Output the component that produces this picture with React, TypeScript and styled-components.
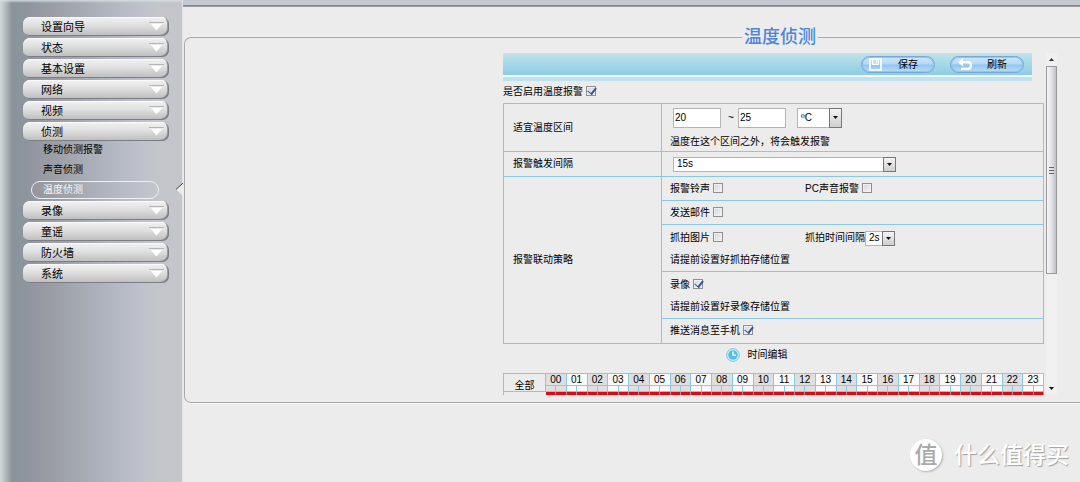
import React from "react";
import styled, { createGlobalStyle, css } from "styled-components";

const LINE = "#86c9e1";

const GlobalStyle = createGlobalStyle`
  * { box-sizing: border-box; }
  body {
    margin: 0;
    background: #ececec;
    color: #000;
    font-family: "Liberation Sans", "Noto Sans CJK SC", sans-serif;
    font-size: 10px;
    line-height: 12px;
  }
  button, input, select { font: inherit; color: inherit; margin: 0; }
`;

const Page = styled.div`
  display: grid;
  grid-template-columns: 183px minmax(0, 1fr);
  min-height: 100vh;
`;

const Sidebar = styled.nav`
  padding: 17px 13px 17px 23px;
  border-right: 1px solid #e4e2e8;
  background:
    linear-gradient(180deg, rgba(214, 224, 228, 0.9) 0, rgba(214, 224, 228, 0) 3px),
    linear-gradient(90deg, #d0dada 0, #b4bfc0 5px, #8a939b 12px, #8d949d 25px, #9396a1 32px,
      #9b9fa4 54px, #a3a7b0 75px, #b2b6c0 110px, #bfc2cc 143px, #c2c5c9 155px, #c4c6cb 180px);
`;

const MenuList = styled.ul`
  display: flex;
  flex-direction: column;
  gap: 2px;
  margin: 0;
  padding: 0;
  list-style: none;
`;

const MenuButton = styled.button`
  display: flex;
  align-items: center;
  justify-content: space-between;
  width: 100%;
  height: 19px;
  padding: 0 4px 0 18px;
  border: 0;
  border-radius: 7px;
  background: linear-gradient(180deg, #f2f2f2 0, #dfdfdf 45%, #bcbcbc 100%);
  box-shadow: inset -1px -1px 0 #7d7d84, inset -2px -1px 0 #9c9ca2, inset 0 1px 0 #fafafa;
  font-size: 11px;
  text-align: left;
`;

const SubList = styled.ul`
  display: flex;
  flex-direction: column;
  gap: 2px;
  margin: 0;
  padding: 0 10px 0 8px;
  list-style: none;
`;

const SubItem = styled.li`
  position: relative;
`;

const SubLink = styled.a<{ $active?: boolean }>`
  display: block;
  height: 18px;
  padding-left: 11px;
  border: 1px solid transparent;
  border-radius: 9px;
  color: #000;
  line-height: 16px;
  text-decoration: none;
  ${(p) => p.$active && css`
    border-color: #eef0f4;
    color: #f4f5f8;
  `}
`;

const Notch = styled.svg`
  position: absolute;
  top: 1px;
  right: -24px;
`;

const Main = styled.main`
  border-top: 5px solid #c3c9d0;
`;

const TopRule = styled.div`
  height: 2px;
  background: linear-gradient(180deg, #77767f, #a9a9af);
`;

const Panel = styled.fieldset`
  min-width: 0;
  margin: 19px 0 0 1px;
  padding: 5px 23px 7px 0;
  border: 1px solid #a9a9a9;
  border-right: 0;
  border-radius: 7px 0 0 7px;
  box-shadow: 0 1px 0 #f8f8f8;
`;

const PanelTitle = styled.legend`
  margin-left: auto;
  margin-right: 239px;
  padding: 0 2px;
  color: #4d86d8;
  font-size: 18px;
  font-weight: 500;
  line-height: 22px;
`;

const ScrollPane = styled.div`
  display: flex;
  justify-content: space-between;
  width: 554px;
  margin-left: auto;
`;

const Content = styled.div`
  flex: 0 0 541px;
`;

const Toolbar = styled.div`
  display: flex;
  justify-content: flex-end;
  gap: 15px;
  height: 28px;
  margin-right: 12px;
  padding: 3px 8px 0 0;
  background: linear-gradient(180deg, #c2e3ec 0, #8bcde4 22px, #f4fafc 22px, #f4fafc 24px, #bfe3ee 24px);
`;

const ToolButton = styled.button`
  display: flex;
  align-items: center;
  justify-content: space-between;
  width: 74px;
  height: 17px;
  padding: 0 16px 0 7px;
  border: 1px solid #74a9d8;
  border-radius: 9px;
  background: linear-gradient(180deg, #cfe6fa 0, #b4d8f8 48%, #8fc3f2 52%, #b9defa 100%);
  box-shadow: inset 0 0 0 1px #98c4ea;
`;

const EnableRow = styled.div`
  display: flex;
  align-items: center;
  height: 22px;
`;

const CheckLabel = styled.label`
  display: inline-flex;
  align-items: flex-start;
  gap: 3px;
  white-space: nowrap;
`;

const Check = styled.input.attrs({ type: "checkbox" })`
  appearance: none;
  position: relative;
  width: 10px;
  height: 10px;
  border: 1px solid #8e8f8f;
  background: linear-gradient(135deg, #cfd3d8, #f8f8f8);
  box-shadow: inset 0 0 0 1px #f0f0f0;
  &:checked::after {
    content: "";
    position: absolute;
    left: 2px;
    top: -1px;
    width: 4px;
    height: 7px;
    border: solid #3450a8;
    border-width: 0 2px 1px 0;
    transform: rotate(38deg);
  }
`;

const SettingsTable = styled.table`
  width: 100%;
  border-collapse: collapse;
  table-layout: fixed;
`;

const SettingName = styled.th`
  width: 158px;
  padding: 0 9px;
  border: 1px solid ${LINE};
  font-weight: 400;
  text-align: left;
`;

const SettingCell = styled.td<{ $h: number }>`
  height: ${(p) => p.$h}px;
  padding: 0 8px;
  border: 1px solid ${LINE};
`;

const Stack = styled.div`
  display: flex;
  flex-direction: column;
  gap: 8px;
`;

const Line = styled.div`
  display: flex;
  align-items: center;
  height: 15px;
`;

const FieldLine = styled(Line)`
  height: 20px;
  padding-left: 3px;
`;

const HalfColumn = styled.div`
  display: flex;
  flex: 0 0 135px;
`;

const TextBox = styled.input`
  width: 48px;
  height: 20px;
  padding: 0 1px;
  border: 1px solid #b4b4b4;
  background: #fff;
`;

const Tilde = styled.span`
  width: 17px;
  padding-left: 7px;
`;

const SelectBox = styled.span<{ $w: number; $h: number; $gap?: number }>`
  position: relative;
  display: inline-flex;
  width: ${(p) => p.$w}px;
  height: ${(p) => p.$h}px;
  margin-left: ${(p) => p.$gap ?? 0}px;
`;

const Select = styled.select`
  appearance: none;
  width: 100%;
  height: 100%;
  padding: 0 14px 0 3px;
  border: 1px solid #b4b4b4;
  border-radius: 0;
  background: #fff;
`;

const Arrow = styled.span`
  position: absolute;
  top: 0;
  right: 0;
  bottom: 0;
  display: flex;
  align-items: center;
  justify-content: center;
  width: 13px;
  border: 1px solid #777;
  background: linear-gradient(180deg, #f4f4f4, #cfcfcf);
  pointer-events: none;
`;

const TimeEdit = styled.div`
  display: flex;
  align-items: center;
  justify-content: center;
  gap: 8px;
  height: 22px;
  padding-right: 34px;
  margin-bottom: 7px;
`;

const LinkButton = styled.button`
  padding: 0;
  border: 0;
  background: none;
`;

const Schedule = styled.table`
  width: 100%;
  border-collapse: collapse;
  table-layout: fixed;
`;

const AllCell = styled.th`
  padding: 5px 0 0;
  border: 1px solid ${LINE};
  font-weight: 400;
  line-height: 11px;
`;

const HourCell = styled.th<{ $alt: boolean }>`
  height: 12px;
  padding: 0;
  border: 1px solid ${LINE};
  background: ${(p) => (p.$alt ? "#dfdfe1" : "#fafafa")};
  font-weight: 400;
  line-height: 11px;
`;

const HalfCell = styled.td<{ $alt: boolean }>`
  height: 6px;
  padding: 0;
  border: 1px solid ${LINE};
  background: ${(p) => (p.$alt ? "#dfdfe1" : "#fafafa")};
`;

const RowHead = styled.td`
  padding: 0;
  border-left: 1px solid ${LINE};
`;

const SlotCell = styled.td`
  height: 3px;
  padding: 0;
  border-right: 1px solid #e07a7e;
  background: #dc0a12;
`;

const ScrollBar = styled.div`
  display: flex;
  flex-direction: column;
  align-items: center;
  width: 11px;
  background: #f0f0f0;
`;

const ScrollEnd = styled.div`
  display: flex;
  align-items: center;
  justify-content: center;
  height: 13px;
`;

const ScrollTrack = styled.div`
  flex: 1;
  width: 100%;
`;

const Thumb = styled.div`
  display: flex;
  align-items: center;
  justify-content: center;
  height: 66%;
  border: 1px solid #9a9a9a;
  background: linear-gradient(90deg, #f6f6f6, #e2e2e4 50%, #bfc0c6);
`;

const Watermark = styled.footer`
  display: flex;
  align-items: center;
  justify-content: flex-end;
  gap: 12px;
  padding: 36px 11px 10px 0;
  color: #fff;
  font-size: 23px;
  font-weight: 500;
  line-height: 32px;
  text-shadow: 1px 1px 1px #a0a0a0;
`;

const Badge = styled.span`
  width: 32px;
  height: 32px;
  border-radius: 50%;
  background: #fff;
  box-shadow: 1px 1px 2px #b0b0b0;
  color: #a9a9a9;
  line-height: 32px;
  text-align: center;
  text-shadow: none;
`;

const MenuArrow = () => (
  <svg width="17" height="13" viewBox="0 0 17 13" aria-hidden="true">
    <path d="M1 2.5H16" stroke="#b4b4b4" />
    <path d="M1 3.5H16" stroke="#ededed" />
    <path d="M3 4H14L8.5 10.5Z" fill="#fff" />
  </svg>
);

const DownGlyph = () => (
  <svg width="5" height="3" viewBox="0 0 5 3" aria-hidden="true">
    <path d="M0 0H5L2.5 3Z" fill="#111" />
  </svg>
);

const SaveIcon = () => (
  <svg width="13" height="13" viewBox="0 0 13 13" fill="none" stroke="#fff" aria-hidden="true">
    <path d="M1 1H12V12H1Z" strokeWidth="1.6" />
    <path d="M3.6 1.5V6.3H9.4V1.5" strokeWidth="1.2" />
    <path d="M7.6 2.4V4.6" strokeWidth="1.4" />
  </svg>
);

const RefreshIcon = () => (
  <svg width="15" height="13" viewBox="0 0 15 13" aria-hidden="true">
    <path d="M4 4.2H10.3Q13 4.4 13 7.4T10.3 10.8H3" fill="none" stroke="#fff" strokeWidth="2.2" />
    <path d="M0 4.2L5 0V8.4Z" fill="#fff" />
  </svg>
);

const ClockIcon = () => (
  <svg width="14" height="14" viewBox="0 0 14 14" aria-hidden="true">
    <circle cx="7" cy="7" r="6.3" fill="#e9f7fb" stroke="#5fc3e3" />
    <circle cx="7" cy="7" r="4.8" fill="#52bfe3" />
    <path d="M7 3.6V7.2H10" fill="none" stroke="#fff" strokeWidth="1.3" />
  </svg>
);

function DropDown(props: { label: string; value: string; options: string[]; w: number; h: number; gap?: number }) {
  return (
    <SelectBox $w={props.w} $h={props.h} $gap={props.gap}>
      <Select aria-label={props.label} defaultValue={props.value}>
        {props.options.map((o) => <option key={o}>{o}</option>)}
      </Select>
      <Arrow><DownGlyph /></Arrow>
    </SelectBox>
  );
}

function CheckField({ text, on }: { text: string; on?: boolean }) {
  return <CheckLabel>{text}<Check defaultChecked={on} /></CheckLabel>;
}

const menu = ["设置向导", "状态", "基本设置", "网络", "视频", "侦测", "录像", "童谣", "防火墙", "系统"];
const detection = ["移动侦测报警", "声音侦测", "温度侦测"];
const hours = Array.from({ length: 24 }, (_, i) => String(i).padStart(2, "0"));
const halves = Array.from({ length: 48 }, (_, i) => i);

export default function App() {
  return (
    <Page>
      <GlobalStyle />
      <Sidebar>
        <MenuList>
          {menu.map((name) => (
            <li key={name}>
              <MenuButton type="button">{name}<MenuArrow /></MenuButton>
              {name === "侦测" && (
                <SubList>
                  {detection.map((d) => {
                    const active = d === "温度侦测";
                    return (
                      <SubItem key={d}>
                        <SubLink href="#" $active={active}>{d}</SubLink>
                        {active && (
                          <Notch width="8" height="15" viewBox="0 0 8 15" aria-hidden="true">
                            <path d="M8 1L1 7.5L8 14Z" fill="#ececec" />
                            <path d="M8 1L1 7.5" stroke="#444" />
                          </Notch>
                        )}
                      </SubItem>
                    );
                  })}
                </SubList>
              )}
            </li>
          ))}
        </MenuList>
      </Sidebar>
      <Main>
        <TopRule />
        <Panel>
          <PanelTitle>温度侦测</PanelTitle>
          <ScrollPane>
            <Content>
              <Toolbar>
                <ToolButton type="button"><SaveIcon />保存</ToolButton>
                <ToolButton type="button"><RefreshIcon />刷新</ToolButton>
              </Toolbar>
              <EnableRow><CheckField text="是否启用温度报警" on /></EnableRow>
              <SettingsTable>
                <tbody>
                  <tr>
                    <SettingName scope="row">适宜温度区间</SettingName>
                    <SettingCell $h={48}>
                      <Stack>
                        <FieldLine>
                          <TextBox aria-label="最低温度" defaultValue="20" />
                          <Tilde>~</Tilde>
                          <TextBox aria-label="最高温度" defaultValue="25" />
                          <DropDown label="温度单位" value="ºC" options={["ºC", "ºF"]} w={45} h={20} gap={11} />
                        </FieldLine>
                        <div>温度在这个区间之外，将会触发报警</div>
                      </Stack>
                    </SettingCell>
                  </tr>
                  <tr>
                    <SettingName scope="row">报警触发间隔</SettingName>
                    <SettingCell $h={25}>
                      <FieldLine>
                        <DropDown label="报警触发间隔" value="15s" options={["15s", "30s", "60s"]} w={223} h={15} />
                      </FieldLine>
                    </SettingCell>
                  </tr>
                  <tr>
                    <SettingName scope="row" rowSpan={5}>报警联动策略</SettingName>
                    <SettingCell $h={24}>
                      <Line>
                        <HalfColumn><CheckField text="报警铃声" /></HalfColumn>
                        <CheckField text="PC声音报警" />
                      </Line>
                    </SettingCell>
                  </tr>
                  <tr>
                    <SettingCell $h={24}><Line><CheckField text="发送邮件" /></Line></SettingCell>
                  </tr>
                  <tr>
                    <SettingCell $h={47}>
                      <Stack>
                        <Line>
                          <HalfColumn><CheckField text="抓拍图片" /></HalfColumn>
                          <span>抓拍时间间隔</span>
                          <DropDown label="抓拍时间间隔" value="2s" options={["2s", "5s", "10s"]} w={30} h={15} />
                        </Line>
                        <div>请提前设置好抓拍存储位置</div>
                      </Stack>
                    </SettingCell>
                  </tr>
                  <tr>
                    <SettingCell $h={47}>
                      <Stack>
                        <Line><CheckField text="录像" on /></Line>
                        <div>请提前设置好录像存储位置</div>
                      </Stack>
                    </SettingCell>
                  </tr>
                  <tr>
                    <SettingCell $h={25}><Line><CheckField text="推送消息至手机" on /></Line></SettingCell>
                  </tr>
                </tbody>
              </SettingsTable>
              <TimeEdit>
                <ClockIcon />
                <LinkButton type="button">时间编辑</LinkButton>
              </TimeEdit>
              <Schedule>
                <colgroup>
                  <col style={{ width: 42 }} />
                  {halves.map((i) => <col key={i} />)}
                </colgroup>
                <tbody>
                  <tr>
                    <AllCell scope="row" rowSpan={2}>全部</AllCell>
                    {hours.map((h, i) => <HourCell key={h} colSpan={2} $alt={i % 2 === 0}>{h}</HourCell>)}
                  </tr>
                  <tr>{halves.map((i) => <HalfCell key={i} $alt={i % 4 < 2} />)}</tr>
                  <tr>
                    <RowHead />
                    {halves.map((i) => <SlotCell key={i} />)}
                  </tr>
                </tbody>
              </Schedule>
            </Content>
            <ScrollBar aria-hidden="true">
              <ScrollEnd>
                <svg width="5" height="3" viewBox="0 0 5 3"><path d="M0 3H5L2.5 0Z" fill="#333" /></svg>
              </ScrollEnd>
              <ScrollTrack>
                <Thumb>
                  <svg width="5" height="7" viewBox="0 0 5 7"><path d="M0 .5H5M0 3.5H5M0 6.5H5" stroke="#666" /></svg>
                </Thumb>
              </ScrollTrack>
              <ScrollEnd><DownGlyph /></ScrollEnd>
            </ScrollBar>
          </ScrollPane>
        </Panel>
        <Watermark><Badge>值</Badge><span>什么值得买</span></Watermark>
      </Main>
    </Page>
  );
}
